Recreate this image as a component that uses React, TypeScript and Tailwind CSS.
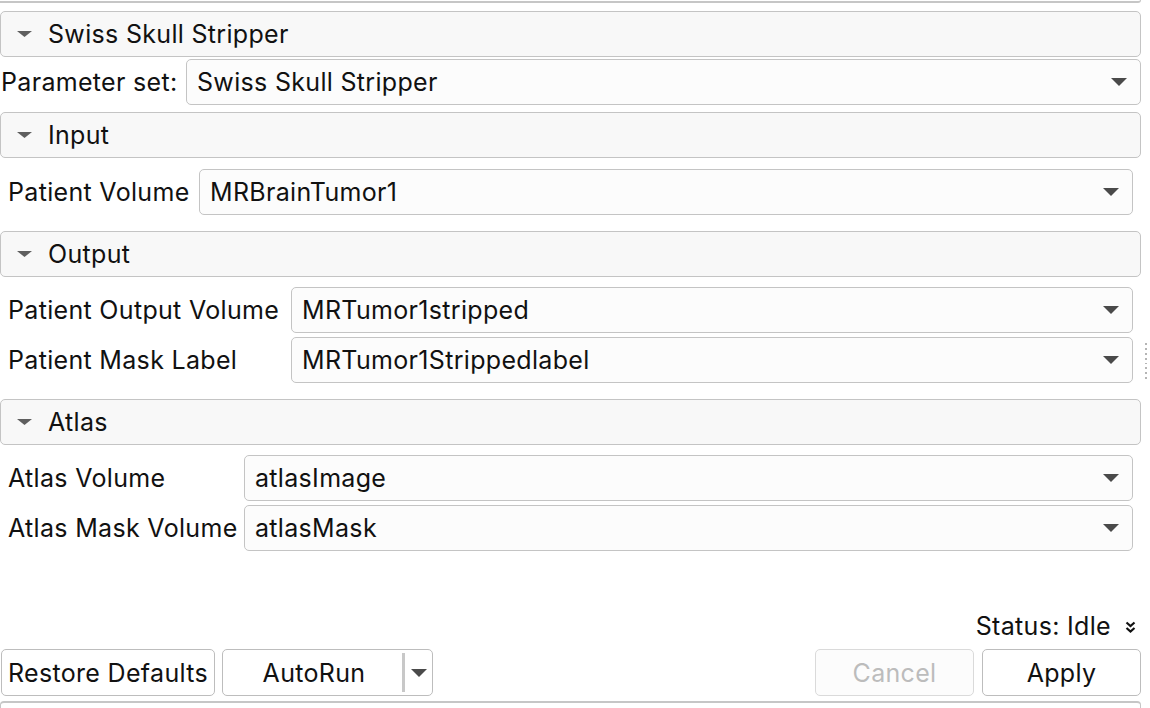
import React from 'react';

const font = { fontFamily: 'Inter, "Liberation Sans", sans-serif', letterSpacing: '0.02em' };

const Caret: React.FC = () => (
	<svg width="16" height="8" viewBox="0 0 16 8" className="shrink-0">
		<polygon points="0,0 16,0 8,8" fill="#4a4a4a" />
	</svg>
);

const SectionHeader: React.FC<{ title: string }> = ({ title }) => (
	<div className="h-[46px] w-full flex items-center rounded-[5px] border border-[#c4c4c4] bg-[#f8f8f8]">
		<svg width="15" height="6" viewBox="0 0 15 6" className="ml-[16px] mr-[16px] shrink-0">
			<polygon points="0,0 15,0 7.5,6" fill="#5f5f5f" />
		</svg>
		<span className="text-[25px] text-[#111] pt-[1px]">{title}</span>
	</div>
);

const Combo: React.FC<{ value: string }> = ({ value }) => (
	<div className="h-[46px] flex-1 min-w-0 flex items-center justify-between rounded-[5px] border border-[#c4c4c4] bg-[#fcfcfc] pl-[10px] pr-[13px]">
		<span className="text-[25px] text-[#111] truncate pt-[1px]">{value}</span>
		<Caret />
	</div>
);

const Row: React.FC<{ label: string; labelWidth: string; value: string }> = ({ label, labelWidth, value }) => (
	<div className="flex items-center">
		<span className={`${labelWidth} shrink-0 text-[25px] text-[#111] whitespace-nowrap pt-[1px]`}>{label}</span>
		<Combo value={value} />
	</div>
);

export default function App() {
	return (
		<div className="w-[1150px] h-[708px] overflow-hidden bg-white flex" style={font}>
			<div className="w-[1141px] flex flex-col">
				{/* tail of the panel above */}
				<div className="h-[3px] shrink-0 border-b-2 border-r border-[#c6c6c6] rounded-br-[4px]" />

				<div className="mt-[8px] shrink-0">
					<SectionHeader title="Swiss Skull Stripper" />
				</div>

				<div className="mt-[2px] shrink-0 flex items-center">
					<span className="w-[186px] shrink-0 pl-[1px] pt-[1px] text-[25px] text-[#111] whitespace-nowrap">Parameter set:</span>
					<Combo value="Swiss Skull Stripper" />
				</div>

				<div className="mt-[7px] shrink-0">
					<SectionHeader title="Input" />
				</div>
				<div className="mt-[11px] shrink-0 px-[8px] flex flex-col gap-[4px]">
					<Row label="Patient Volume" labelWidth="w-[191px]" value="MRBrainTumor1" />
				</div>

				<div className="mt-[16px] shrink-0">
					<SectionHeader title="Output" />
				</div>
				<div className="mt-[10px] shrink-0 px-[8px] flex flex-col gap-[4px]">
					<Row label="Patient Output Volume" labelWidth="w-[283px]" value="MRTumor1stripped" />
					<Row label="Patient Mask Label" labelWidth="w-[283px]" value="MRTumor1Strippedlabel" />
				</div>

				<div className="mt-[16px] shrink-0">
					<SectionHeader title="Atlas" />
				</div>
				<div className="mt-[10px] shrink-0 px-[8px] flex flex-col gap-[4px]">
					<Row label="Atlas Volume" labelWidth="w-[236px]" value="atlasImage" />
					<Row label="Atlas Mask Volume" labelWidth="w-[236px]" value="atlasMask" />
				</div>

				{/* status */}
				<div className="mt-[64px] h-[24px] shrink-0 flex items-center justify-end">
					<span className="text-[25px] text-[#111]">Status: Idle</span>
					<svg width="11" height="13" viewBox="0 0 11 13" className="ml-[14px] mr-[5px]">
						<polyline points="1.5,1.5 5.5,5 9.5,1.5" fill="none" stroke="#111" strokeWidth="2.2" />
						<polyline points="1.5,7 5.5,10.5 9.5,7" fill="none" stroke="#111" strokeWidth="2.2" />
					</svg>
				</div>

				{/* buttons */}
				<div className="mt-[10px] h-[47px] shrink-0 flex items-stretch">
					<button className="ml-[1px] w-[214px] rounded-[5px] border border-[#bdbdbd] bg-white text-[25px] text-[#111] pt-[2px]">
						Restore Defaults
					</button>
					<div className="ml-[7px] w-[211px] flex items-stretch rounded-[5px] border border-[#bdbdbd] bg-white">
						<span className="flex-1 flex items-center justify-center text-[25px] text-[#111] pl-[3px] pt-[2px]">AutoRun</span>
						<div className="w-[3px] my-[3px] bg-[#c8c8c8]" />
						<div className="w-[27px] flex items-center justify-center">
							<Caret />
						</div>
					</div>
					<div className="flex-1" />
					<button className="w-[159px] rounded-[5px] border border-[#dadada] bg-[#fcfcfc] text-[25px] text-[#bcbcbc] pt-[2px]">
						Cancel
					</button>
					<button className="ml-[8px] w-[159px] rounded-[5px] border border-[#bdbdbd] bg-white text-[25px] text-[#111] pt-[2px]">
						Apply
					</button>
				</div>

				{/* head of the panel below */}
				<div className="mt-[5px] h-[12px] shrink-0 border-t-2 border-l border-r border-[#c6c6c6] rounded-t-[4px]" />
			</div>

			{/* splitter grip */}
			<div className="flex-1 flex justify-center">
				<div className="mt-[343px] h-[36px] flex flex-col gap-[3px]">
					{Array.from({ length: 8 }).map((_, i) => (
						<div key={i} className="w-[2px] h-[2px] bg-[#b5b5b5]" />
					))}
				</div>
			</div>
		</div>
	);
}
